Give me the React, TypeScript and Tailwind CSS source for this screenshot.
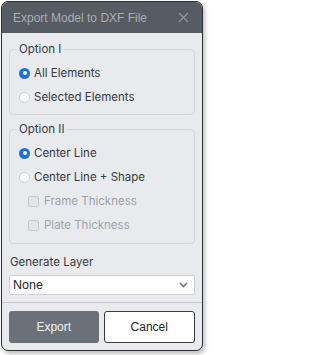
import React from "react";

function Radio({ checked, label }: { checked?: boolean; label: string }) {
  return (
    <label className="flex items-center h-[24px] gap-[4px]">
      {checked ? (
        <span className="w-[11px] h-[11px] rounded-full bg-[#1a6ff0] flex items-center justify-center">
          <span className="w-[4px] h-[4px] rounded-full bg-white" />
        </span>
      ) : (
        <span className="w-[11px] h-[11px] rounded-full bg-white border border-[#c9ccd1]" />
      )}
      <span className="text-[#343a40]">{label}</span>
    </label>
  );
}

function Check({ label }: { label: string }) {
  return (
    <label className="flex items-center h-[24px] gap-[5px] pl-[9px]">
      <span className="w-[11px] h-[11px] rounded-[2px] bg-[#e3e5e9] border border-[#c6c9ce]" />
      <span className="text-[#9ea2a8]">{label}</span>
    </label>
  );
}

export default function App() {
  return (
    <div
      className="w-[206px] h-[355px] bg-white pt-[1px] pl-[1px]"
      style={{ fontFamily: "Inter, 'Noto Sans', sans-serif" }}
    >
      <div className="w-[202px] h-[350px] border border-[#2e3134] rounded-[7px] overflow-hidden bg-[#e9eaee] flex flex-col shadow-[2px_3px_4px_rgba(0,0,0,0.25)]">
        <div className="h-[31px] bg-[#565c63] flex items-center justify-between pl-[11px] pr-[12px] shrink-0">
          <span
            className="text-[12px] text-[#aaaeb3]"
            style={{ fontFamily: "'Liberation Sans', Arial, sans-serif" }}
          >
            Export Model to DXF File
          </span>
          <svg width="11" height="11" viewBox="0 0 11 11" className="mr-[1px]">
            <path d="M1 1L10 10M10 1L1 10" stroke="#8f959b" strokeWidth="1.2" />
          </svg>
        </div>
        <div className="px-[7px] pt-[8px] pb-[7px] text-[11.5px] leading-[16px]">
          <fieldset className="border border-[#d3d6db] rounded-[4px] px-[9px] pt-[4px] pb-[5px]">
            <legend className="ml-[-2px] px-[2px] text-[#343a40]">Option I</legend>
            <Radio checked label="All Elements" />
            <Radio label="Selected Elements" />
          </fieldset>
          <fieldset className="mt-[6px] border border-[#d3d6db] rounded-[4px] px-[9px] pt-[4px] pb-[6px]">
            <legend className="ml-[-2px] px-[2px] text-[#343a40]">Option II</legend>
            <Radio checked label="Center Line" />
            <Radio label="Center Line + Shape" />
            <Check label="Frame Thickness" />
            <Check label="Plate Thickness" />
          </fieldset>
          <div className="mt-[10px] pl-[1px] text-[#343a40]">Generate Layer</div>
          <div className="mt-[5px] h-[20px] bg-white border border-[#cdd0d4] rounded-[2px] flex items-center justify-between pl-[3px] pr-[6px]">
            <span
              className="text-[#212529] text-[12.5px]"
              style={{ fontFamily: "'Liberation Sans', Arial, sans-serif" }}
            >
              None
            </span>
            <svg width="9" height="6" viewBox="0 0 9 6">
              <path d="M1 1L4.5 4.5L8 1" stroke="#6f757b" strokeWidth="1.6" fill="none" />
            </svg>
          </div>
        </div>
        <div
          className="border-t border-[#c4c7cc] flex gap-[5px] px-[7px] pt-[8px]"
          style={{ fontFamily: "'Liberation Sans', Arial, sans-serif" }}
        >
          <button className="flex-1 h-[32px] rounded-[3px] bg-[#6b7178] text-[#f2f2f2] text-[12px]">
            Export
          </button>
          <button className="flex-1 h-[32px] rounded-[3px] bg-white border border-[#3a3d40] text-[#212529] text-[12px]">
            Cancel
          </button>
        </div>
      </div>
    </div>
  );
}
